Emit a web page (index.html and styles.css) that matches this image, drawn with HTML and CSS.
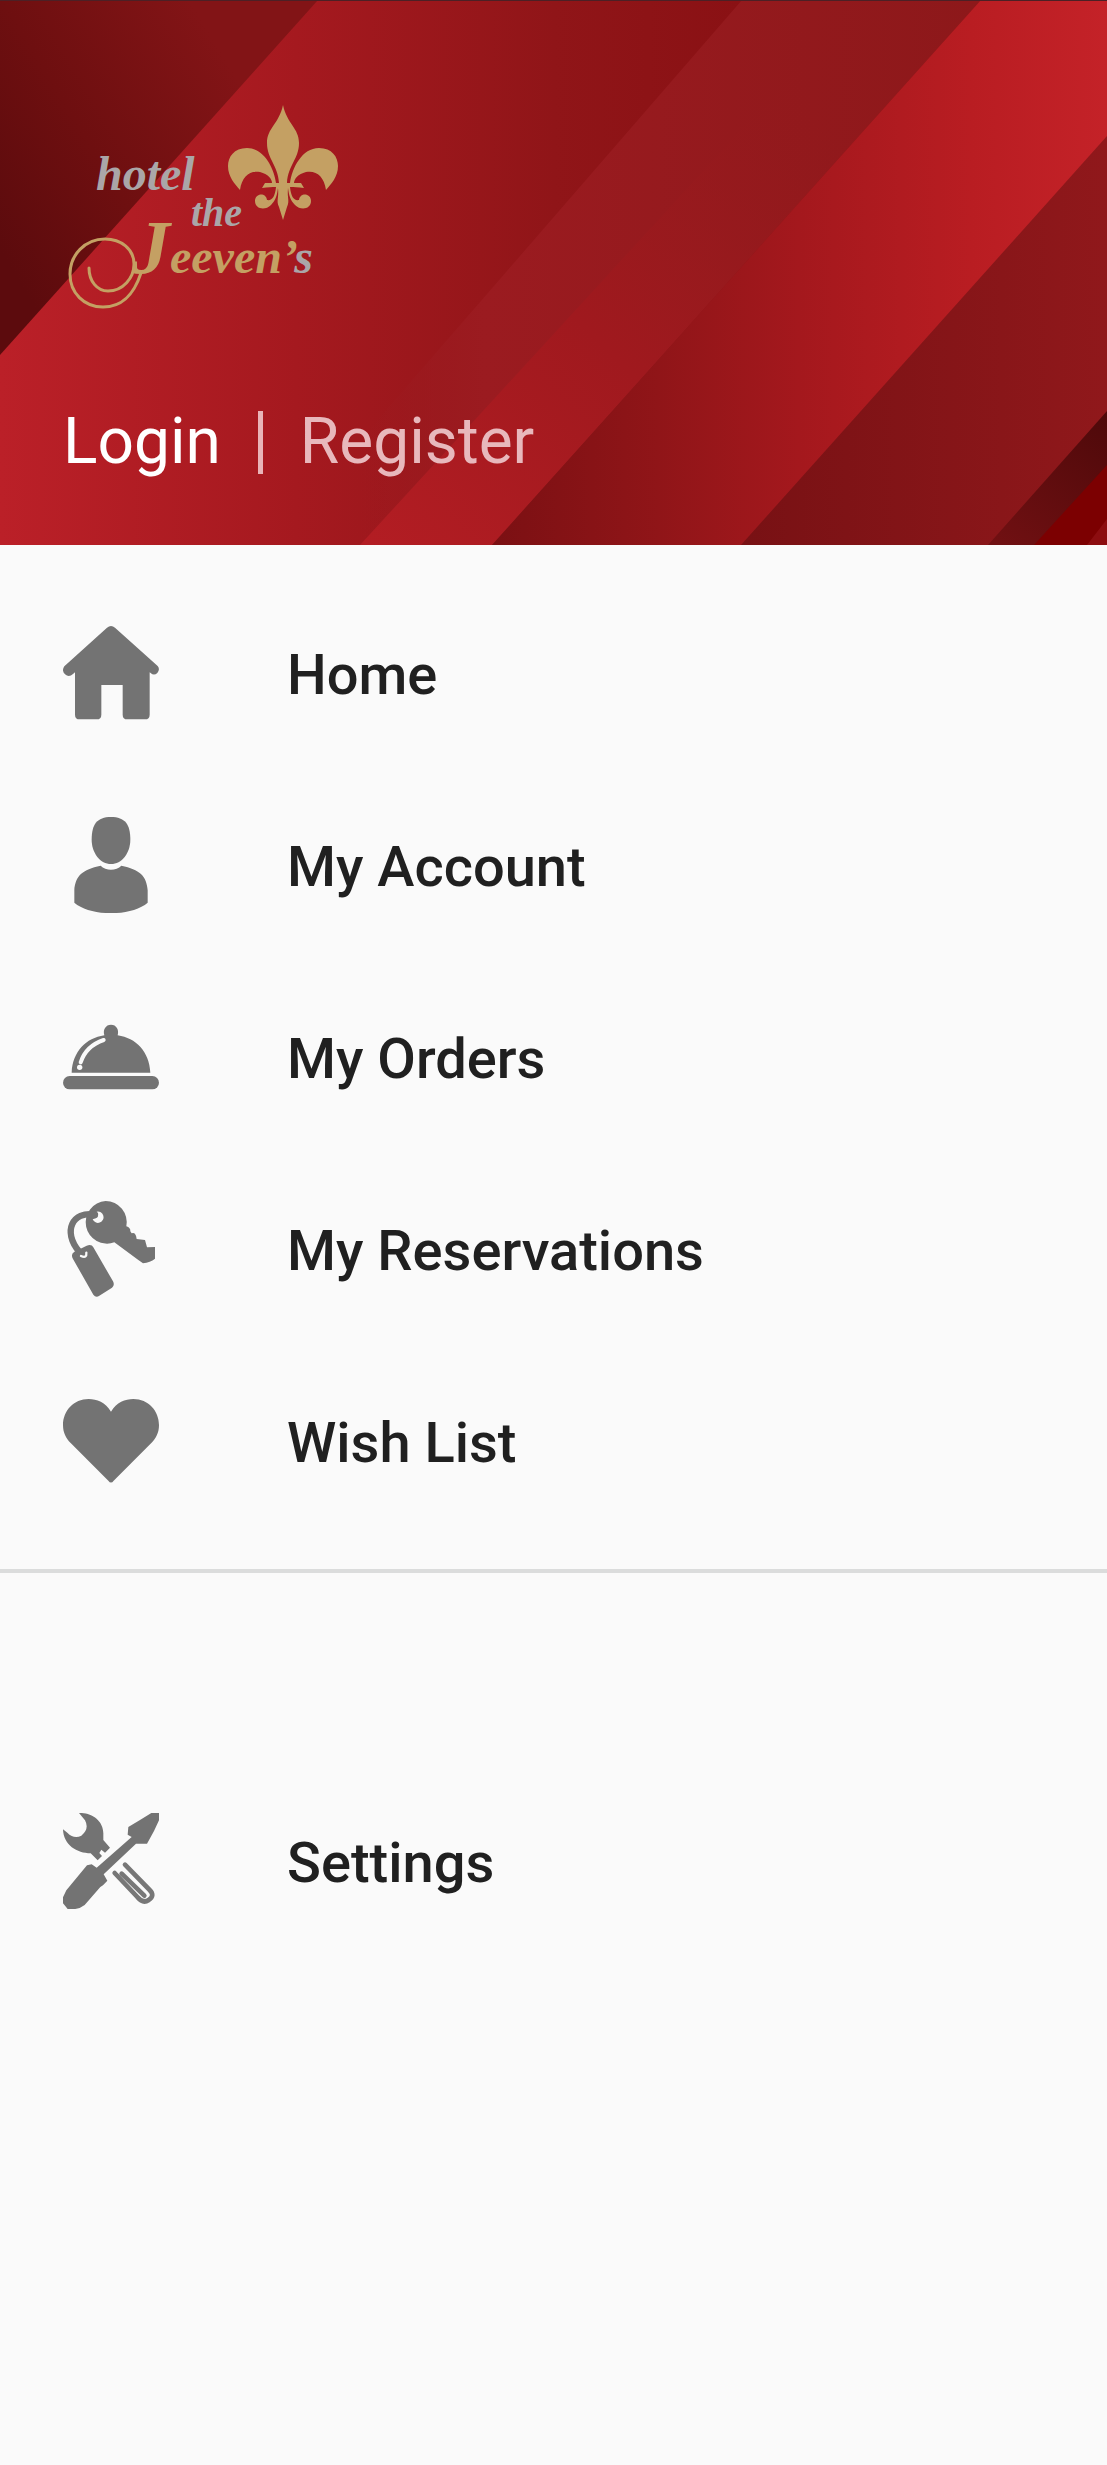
FILE: index.html
```html
<!DOCTYPE html>
<html lang="en">
<head>
<meta charset="utf-8">
<meta name="viewport" content="width=device-width, initial-scale=1">
<title>Hotel the Jeeven's</title>
<link rel="stylesheet" href="styles.css">
</head>
<body>
<header class="header">
  <svg class="header-art" viewBox="0 0 1107 545" preserveAspectRatio="none" aria-hidden="true">
    <defs>
      <linearGradient id="dark" gradientUnits="userSpaceOnUse" x1="0" y1="250" x2="250" y2="100"><stop offset="0" stop-color="#5c0b0d"/><stop offset=".45" stop-color="#6e0f10"/><stop offset="1" stop-color="#821416"/></linearGradient>
      <linearGradient id="base" gradientUnits="userSpaceOnUse" x1="0" y1="0" x2="740" y2="0"><stop offset="0" stop-color="#bb2028"/><stop offset=".4" stop-color="#a5191f"/><stop offset=".75" stop-color="#901518"/><stop offset="1" stop-color="#8a1114"/></linearGradient>
      <linearGradient id="veil" gradientUnits="userSpaceOnUse" x1="360" y1="0" x2="980" y2="0"><stop offset="0" stop-color="#9c1b20" stop-opacity="0"/><stop offset=".2" stop-color="#9b1b20"/><stop offset="1" stop-color="#8d181a"/></linearGradient>
      <linearGradient id="mid" gradientUnits="userSpaceOnUse" x1="360" y1="545" x2="800" y2="100"><stop offset="0" stop-color="#b31d23"/><stop offset=".5" stop-color="#a0191e"/><stop offset="1" stop-color="#931a1c" stop-opacity="0"/></linearGradient>
      <linearGradient id="bright" gradientUnits="userSpaceOnUse" x1="492" y1="0" x2="1107" y2="0"><stop offset="0" stop-color="#7b1013"/><stop offset=".27" stop-color="#901518"/><stop offset=".5" stop-color="#a4181d"/><stop offset=".78" stop-color="#b91d22"/><stop offset="1" stop-color="#c42228"/></linearGradient>
      <linearGradient id="low" gradientUnits="userSpaceOnUse" x1="741" y1="0" x2="1107" y2="0"><stop offset="0" stop-color="#781114"/><stop offset="1" stop-color="#90181b"/></linearGradient>
      <linearGradient id="corner" gradientUnits="userSpaceOnUse" x1="1000" y1="545" x2="1107" y2="411"><stop offset="0" stop-color="#701012"/><stop offset="1" stop-color="#4e090a"/></linearGradient>
    </defs>
    <path fill="url(#base)" d="M0 0H1107V545H0z"/>
    <path fill="url(#dark)" d="M0 0H318L0 355z"/>
    <path fill="url(#veil)" d="M742 0H981L492 545H280L360 440L494 286z"/>
    <path fill="url(#mid)" d="M860 0H981L492 545H360z"/>
    <path fill="url(#bright)" d="M981 0H1107V545H492z"/>
    <path fill="url(#low)" d="M1107 136V545H741z"/>
    <path fill="url(#corner)" d="M1107 411V545H988z"/>
    <path fill="#7c0001" d="M1107 465V545H1034z"/>
    <path fill="#8c0d10" d="M1107 519V545H1087z"/>
    <path fill="#4c2025" d="M0 0H1107V1H0z"/>
  </svg>
  <svg class="logo" viewBox="0 0 300 230" role="img" aria-label="Hotel the Jeeven's">
    <text class="silver" x="46" y="100" font-size="48">hotel</text>
    <text class="silver" x="141" y="136" font-size="40">the</text>
    <text class="gold" x="82" y="183" font-size="48"><tspan font-size="76">J</tspan>eeven’<tspan class="silver">s</tspan></text>
    <g class="gold">
      <path fill="none" stroke="#c4a063" stroke-width="3" stroke-linecap="round" d="M39 178C39 191 47 201 58 201C73 201 84 188 84 174C84 159 71 149 55 149C35 149 20 165 20 184C20 203 34 217 53 217C73 217 84 204 91 183"/>
      <path d="M233 15C237 34 249 38 249 53C249 69 238 75 237 93H229C228 75 217 69 217 53C217 38 229 34 233 15z"/>
      <path d="M226 93C224 78 214 58 197 58C184 58 178 67 178 76C178 87 185 94 190 100C192 86 200 80 210 82C218 84 222 89 222 93z"/>
      <path d="M240 93C242 78 252 58 269 58C282 58 288 67 288 76C288 87 281 94 276 100C274 86 266 80 256 82C248 84 244 89 244 93z"/>
      <path d="M215 93H251L254 98C248 97 244 97 240 97C241 107 244 111 249 110C250 102 261 103 261 111C261 119 251 121 245 115C240 110 239 105 238 98C237 109 240 110 237 117L233 130L229 117C226 110 229 109 228 98C227 105 226 110 221 115C215 121 205 119 205 111C205 103 216 102 217 110C222 111 225 107 226 97C222 97 218 97 212 98z"/>
    </g>
  </svg>
  <nav class="auth" aria-label="Sign in">
    <a class="login" href="#login">Login</a>
    <span class="bar"></span>
    <a class="register" href="#register">Register</a>
  </nav>
</header>
<nav class="menu" aria-label="Main">
  <a class="row" href="#home">
    <svg class="icon" viewBox="0 0 288 288" aria-hidden="true"><path d="M132 8Q144-2 156 8L284 123Q292 133 283 144Q273 153 263 144L260 142V269Q260 283 246 283H193Q179 283 179 269V180H115V269Q115 283 101 283H50Q36 283 36 269V142L30 147Q18 158 6 148Q-5 137 4 124z"/></svg>
    <span class="label">Home</span>
  </a>
  <a class="row" href="#account">
    <svg class="icon" viewBox="0 0 288 288" aria-hidden="true"><path d="M144 0C186 0 202 22 202 68C202 108 176 141 144 141C112 141 86 108 86 68C86 22 102 0 144 0z"/><path d="M113 146C128 162 160 162 175 146C230 157 251 177 254 220V257C205 299 83 299 34 257V220C37 177 58 157 113 146z"/></svg>
    <span class="label">My Account</span>
  </a>
  <a class="row" href="#orders">
    <svg class="icon" viewBox="0 0 288 288" aria-hidden="true"><path d="M26 191C29 128 69 87 124 79C119 62 128 47 144 47C160 47 169 62 164 79C219 87 259 128 262 191z"/><rect y="201" width="288" height="40" rx="20"/><path class="shine" d="M53 160Q69 111 122 93"/><circle class="hole" cx="50" cy="175" r="8"/></svg>
    <span class="label">My Orders</span>
  </a>
  <a class="row" href="#reservations">
    <svg class="icon" viewBox="0 0 288 288" aria-hidden="true"><path fill-rule="evenodd" d="M128 0A64 64 0 0 1 190 76Q203 80 202 91L206 97Q218 92 221 114L246 117L252 139L276 138V173Q262 184 240 187Q232 181 226 177L154 124A64 64 0 1 1 128 0zM101 32Q113 49 89 55A17 17 0 1 0 101 32z"/><path class="ring" d="M96 41C28 29-2 92 48 151"/><path d="M34 152L71 134Q86 129 91 139L150 241Q156 253 147 260L109 284Q99 292 91 281L30 174Q22 160 34 152z"/><path class="eyelet" d="M54 165Q72 173 70 155"/></svg>
    <span class="label">My Reservations</span>
  </a>
  <a class="row" href="#wishes">
    <svg class="icon" viewBox="0 0 288 288" aria-hidden="true"><path d="M144 56C128 28 101 18 77 18C32 18 0 54 0 96C0 119 9 136 23 150L136 263Q144 274 152 263L265 150C279 136 288 119 288 96C288 54 256 18 211 18C187 18 160 28 144 56z"/></svg>
    <span class="label">Wish List</span>
  </a>
</nav>
<hr class="divider">
<nav class="menu settings" aria-label="Preferences">
  <a class="row" href="#settings">
    <svg class="icon" viewBox="0 0 288 288" aria-hidden="true"><path d="M48 0C84-2 123 22 121 65V81L141 104L126 119L115 110L109 120L117 129L104 142L83 121C42 121 1 96 0 49L13 59Q33 79 55 68Q80 48 66 22z"/><path d="M288 0V22L273 54L252 92H219L122 184L133 203L120 217L112 222L65 276Q47 290 27 288H14L0 271V253L10 232L72 157L86 154L101 164L206 72L194 65L196 42L231 21L265 0z"/><path class="handle" d="M155 180L223 252Q240 273 257 261Q277 248 260 231L186 155M176 182L244 248"/></svg>
    <span class="label">Settings</span>
  </a>
</nav>
</body>
</html>
```
FILE: styles.css
```css
* { box-sizing: border-box; }
body {
  margin: 0;
  min-height: 100vh;
  background: #fafafa;
  color: #202020;
  font-family: Roboto, "Liberation Sans", sans-serif;
}
a { color: inherit; text-decoration: none; }
.header {
  position: relative;
  display: flex;
  flex-direction: column;
  gap: 82px;
  padding: 90px 50px 63px;
}
.header-art {
  position: absolute;
  inset: 0;
  width: 100%;
  height: 100%;
}
.logo {
  position: relative;
  width: 300px;
  height: 230px;
}
.logo text {
  font-family: "Liberation Serif", serif;
  font-style: italic;
  font-weight: 700;
}
.silver { fill: #aaa6a8; }
.gold { fill: #c4a063; }
.auth {
  position: relative;
  display: flex;
  align-items: center;
  gap: 37px;
  padding-left: 13px;
  font-size: 64px;
  line-height: 80px;
  color: #fff;
}
.bar {
  width: 5px;
  height: 63px;
  background: #e9b4b8;
}
.register { color: #e8b8bc; }
.menu { padding: 32px 0; }
.row {
  display: flex;
  align-items: center;
  gap: 128px;
  height: 192px;
  padding: 0 63px;
  font-size: 56px;
  font-weight: 500;
}
.label { padding-top: 4px; }
.icon {
  flex: none;
  width: 96px;
  height: 96px;
  fill: #737373;
}
.shine, .ring, .handle, .eyelet { fill: none; stroke-linecap: round; }
.shine { stroke: #fafafa; stroke-width: 12; }
.hole { fill: #fafafa; }
.ring { stroke: #737373; stroke-width: 19; }
.eyelet { stroke: #fafafa; stroke-width: 7; }
.handle { stroke: #777; stroke-width: 14; }
.divider {
  height: 4px;
  margin: 0;
  border: 0;
  background: #dbdcdc;
}
.settings { padding-top: 192px; }
```
